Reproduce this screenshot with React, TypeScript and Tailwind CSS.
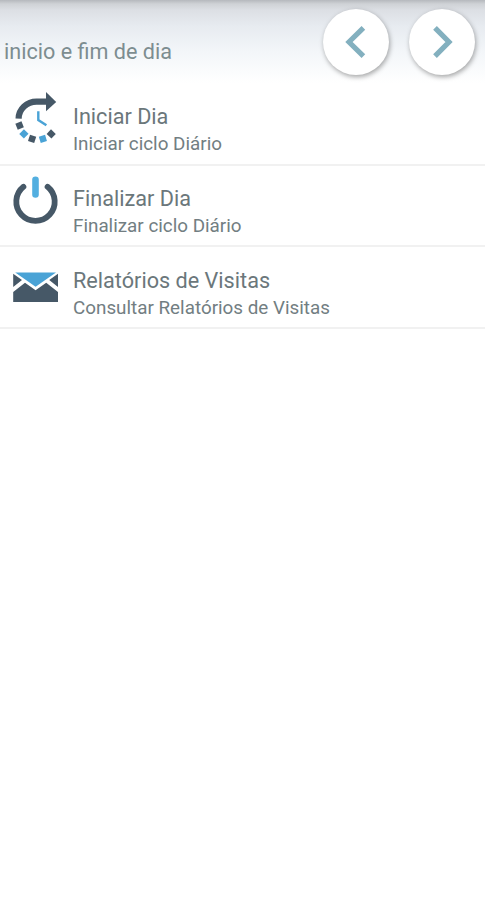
import React from "react";

interface MenuItem {
  id: number;
  title: string;
  subtitle: string;
  icon: React.ReactNode;
}

const CycleIcon: React.FC = () => (
  <svg className="h-20 w-12 shrink-0" viewBox="0 1 48 80" fill="none">
    <path d="M6.6 35.6A18 17.2 0 0 1 24.8 18.6H36" stroke="#465867" strokeWidth="6.2" />
    <path d="M34 9L44.2 18.9L34 28.2Z" fill="#465867" />
    <g strokeWidth="6.6">
      <path d="M6.4 39.6L8.8 45.4" stroke="#465867" />
      <path d="M9.6 48.6L14.2 53.2" stroke="#4aa3d6" />
      <path d="M17 54.8L23.2 56.8" stroke="#465867" />
      <path d="M27.8 56.8L34 54.9" stroke="#4aa3d6" />
      <path d="M37 53.2L41.4 48.6" stroke="#465867" />
    </g>
    <path d="M26.3 28.2V37L34.4 42.2" stroke="#4aa3d6" strokeWidth="2.4" />
  </svg>
);

const PowerIcon: React.FC = () => (
  <svg className="h-20 w-12 shrink-0" viewBox="0 1 48 80" fill="none" strokeLinecap="round">
    <path d="M11.4 21.8A19.2 19.2 0 1 0 35.6 21.8" stroke="#465867" strokeWidth="5.8" />
    <path d="M23.5 14.8V29.4" stroke="#53afe0" strokeWidth="6.6" />
  </svg>
);

const MailIcon: React.FC = () => (
  <svg className="h-20 w-12 shrink-0" viewBox="0 1 48 80">
    <path d="M3.2 26.6H44L23.6 40.8Z" fill="#4aa3d6" />
    <path d="M1.2 27.8L10 34L1.2 41ZM46 27.8L37.2 34L46 41Z" fill="#465867" />
    <path d="M1.2 46L13 36.8L23.6 44.2L34.2 36.8L46 46V55.9H1.2Z" fill="#465867" />
  </svg>
);

const menuItems: MenuItem[] = [
  { id: 1, title: "Iniciar Dia", subtitle: "Iniciar ciclo Diário", icon: <CycleIcon /> },
  { id: 2, title: "Finalizar Dia", subtitle: "Finalizar ciclo Diário", icon: <PowerIcon /> },
  {
    id: 3,
    title: "Relatórios de Visitas",
    subtitle: "Consultar Relatórios de Visitas",
    icon: <MailIcon />,
  },
];

interface NavButtonProps {
  label: string;
  path: string;
}

const NavButton: React.FC<NavButtonProps> = (props) => (
  <button
    aria-label={props.label}
    className="h-[66px] w-[66px] rounded-full bg-white shadow-[1px_2px_5px_rgba(0,0,0,0.35)]"
  >
    <svg className="h-full w-full" viewBox="0 0 66 66" fill="none">
      <path d={props.path} stroke="#83b0bf" strokeWidth="5.2" />
    </svg>
  </button>
);

const App: React.FC = () => {
  return (
    <div className="min-h-screen bg-white font-['Roboto',sans-serif]">
      {/* Header */}
      <header className="flex h-[84px] items-start justify-between bg-[linear-gradient(to_bottom,#b5b8bd_0px,#cfd2d6_4px,#dcdfe4_10px,#e7ebf0_26px,#f3f6f9_52px,#ffffff_83px)] pr-[9.8px] pl-1">
        <h1 className="pt-[37px] text-[21.6px] leading-[30px] text-[#7d8d90]">inicio e fim de dia</h1>
        <div className="flex gap-5 pt-[9px]">
          <NavButton label="Anterior" path="M40.4 18.8L26 33L40.4 47.2" />
          <NavButton label="Seguinte" path="M26 18.8L40 33L26 47.2" />
        </div>
      </header>
      {/* Menu */}
      <ul>
        {menuItems.map((item) => (
          <li key={item.id} className="flex h-[81.7px] border-b-2 border-[#f1f1f1] pl-3">
            {item.icon}
            <div className="pt-[19.3px] pl-[13px]">
              <h2 className="text-[21.65px] leading-7 text-[#6b777b]">{item.title}</h2>
              <p className="text-[18.83px] leading-[26px] text-[#727e82]">{item.subtitle}</p>
            </div>
          </li>
        ))}
      </ul>
    </div>
  );
};

export default App;
